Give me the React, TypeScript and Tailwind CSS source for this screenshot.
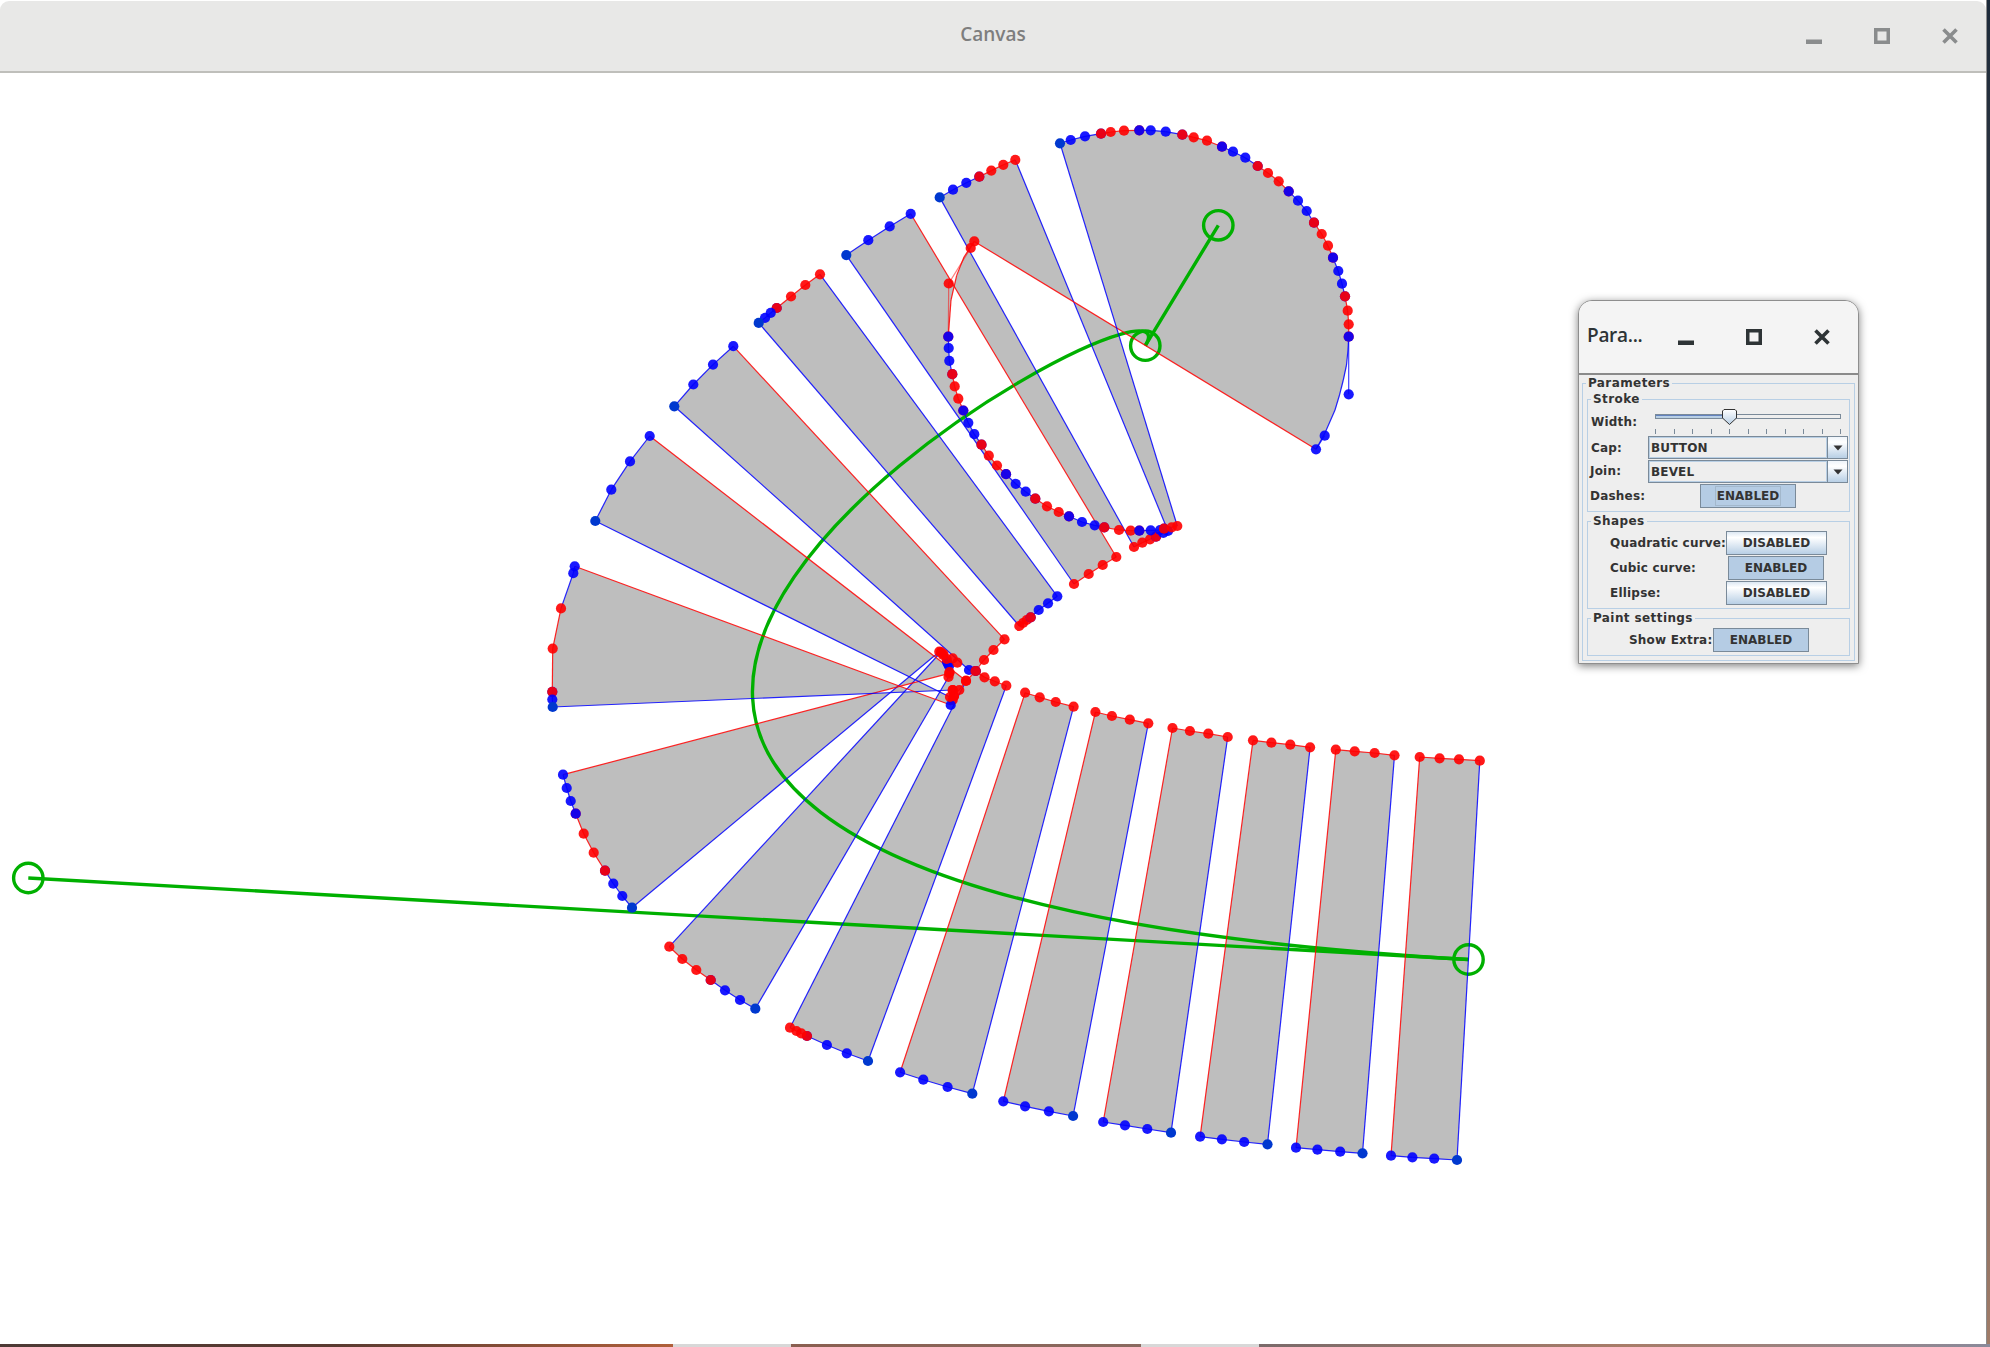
import React from 'react';

type Kind = 'r' | 'b' | 'R' | 'B' | 'g' | 'n' | 'x';
type Pt = [number, number, Kind];
type Strip = { outer: Pt[]; a: string; inner: Pt[]; b: string };

const RED = '#ff0000';
const BLUE = '#0000ff';
const GREEN = '#00b000';

const strips: Strip[] = [
  {
    outer: [[1419.7, 757, 'r'], [1439.6, 758.3, 'r'], [1459, 759.3, 'r'], [1479.8, 760.7, 'r']],
    a: BLUE,
    inner: [[1457, 1160, 'g'], [1434.2, 1158.7, 'b'], [1412.4, 1157.3, 'b'], [1391, 1155.7, 'b']],
    b: RED,
  },
  {
    outer: [[1335.8, 749.7, 'r'], [1354.7, 751.3, 'r'], [1374.6, 753, 'r'], [1394.5, 755.3, 'r']],
    a: BLUE,
    inner: [[1362.5, 1153.3, 'g'], [1340.2, 1151.7, 'b'], [1317.4, 1149.7, 'b'], [1296, 1147.7, 'b']],
    b: RED,
  },
  {
    outer: [[1253, 740.3, 'r'], [1271.4, 742.7, 'r'], [1290.3, 744.7, 'r'], [1310.1, 747.3, 'r']],
    a: BLUE,
    inner: [[1267.5, 1144.3, 'g'], [1244.2, 1142, 'b'], [1221.9, 1139.3, 'b'], [1200.1, 1136.7, 'b']],
    b: RED,
  },
  {
    outer: [[1172.5, 728, 'r'], [1189.9, 731, 'r'], [1208.3, 733.7, 'r'], [1227.7, 737, 'r']],
    a: BLUE,
    inner: [[1171, 1132.7, 'g'], [1147.3, 1129, 'b'], [1125, 1125.3, 'b'], [1103.2, 1122, 'b']],
    b: RED,
  },
  {
    outer: [[1095.4, 712, 'r'], [1111.9, 716, 'r'], [1129.8, 719.7, 'r'], [1148.3, 723.3, 'r']],
    a: BLUE,
    inner: [[1073.1, 1116, 'g'], [1048.9, 1111.3, 'b'], [1025.1, 1106.3, 'b'], [1003.3, 1101.3, 'b']],
    b: RED,
  },
  {
    outer: [[1025.1, 692.7, 'r'], [1039.7, 697.3, 'r'], [1055.7, 702, 'r'], [1073.6, 706.7, 'r']],
    a: BLUE,
    inner: [[972.3, 1093.7, 'g'], [947.6, 1087, 'b'], [923.3, 1079.7, 'b'], [900.1, 1072.3, 'b']],
    b: RED,
  },
  {
    outer: [[966, 681, 'r'], [976, 671, 'r'], [984.5, 677.3, 'r'], [994.8, 681.3, 'r'], [1006.3, 685.7, 'r']],
    a: BLUE,
    inner: [[868, 1061, 'g'], [846.8, 1053.3, 'b'], [826.9, 1045, 'b'], [807, 1036, 'R'], [801.2, 1033.3, 'r'], [796.4, 1031, 'r'], [790, 1027.7, 'r']],
    b: BLUE,
  },
  {
    outer: [[669.3, 946.7, 'r'], [682.3, 959, 'r'], [696.3, 970, 'r'], [710.7, 980, 'R'], [725, 990.3, 'b'], [740, 1000, 'b'], [755.3, 1008.7, 'g']],
    a: BLUE,
    inner: [[948.5, 677, 'r'], [947, 662, 'b'], [943, 655, 'r'], [941, 652, 'r']],
    b: BLUE,
  },
  {
    outer: [[563, 774.7, 'b'], [566.7, 788, 'b'], [570.7, 801, 'b'], [575.7, 813.7, 'B'], [583.7, 833.7, 'r'], [593.7, 852.7, 'r'], [605, 870.7, 'R'], [613.3, 883.7, 'b'], [622.3, 896, 'b'], [632, 907.7, 'g']],
    a: BLUE,
    inner: [[939.3, 651.7, 'r'], [948, 664, 'b'], [949.3, 673.3, 'r']],
    b: RED,
  },
  {
    outer: [[574.7, 566.3, 'b'], [573.3, 573.2, 'b'], [561, 608.4, 'r'], [552.7, 648.6, 'r'], [552.3, 691.8, 'R'], [552.3, 699.5, 'b'], [552.7, 707, 'g']],
    a: BLUE,
    inner: [[952.7, 690, 'r'], [954, 696, 'r'], [952.7, 700, 'r'], [950.7, 705, 'b']],
    b: RED,
  },
  {
    outer: [[649.7, 436, 'b'], [630, 461.4, 'b'], [611.3, 489.7, 'b'], [595.3, 521, 'g']],
    a: BLUE,
    inner: [[950, 697, 'r'], [959.3, 690, 'r'], [966, 680.7, 'r']],
    b: RED,
  },
  {
    outer: [[733.3, 346.2, 'b'], [713, 364.6, 'b'], [693.3, 384.5, 'b'], [674.3, 406.3, 'g']],
    a: BLUE,
    inner: [[969, 670, 'b'], [975.5, 671, 'R'], [984, 660, 'r'], [993.5, 650, 'r'], [1004.5, 639.3, 'r']],
    b: RED,
  },
  {
    outer: [[820, 274.3, 'r'], [805.3, 285, 'r'], [791, 296.5, 'r'], [776.7, 308, 'R'], [770.7, 312.9, 'b'], [765, 317.9, 'b'], [758.7, 322.9, 'g']],
    a: BLUE,
    inner: [[1019.3, 626, 'r'], [1023, 623, 'r'], [1026.7, 620, 'r'], [1030.7, 617.3, 'R'], [1038.7, 610, 'b'], [1048, 603.3, 'b'], [1057.3, 596.3, 'b']],
    b: BLUE,
  },
  {
    outer: [[910.7, 213.8, 'b'], [889.7, 226.4, 'b'], [868.3, 240.2, 'b'], [846.3, 255.1, 'g']],
    a: BLUE,
    inner: [[1074, 584, 'r'], [1088.7, 574, 'r'], [1102.7, 565, 'r'], [1116.3, 557, 'r']],
    b: RED,
  },
  {
    outer: [[1015.3, 159.9, 'r'], [1003.3, 164.8, 'r'], [991.3, 170.6, 'r'], [979.3, 176.7, 'R'], [966.3, 182.8, 'b'], [953, 189.7, 'b'], [939.7, 197.4, 'g']],
    a: BLUE,
    inner: [[1134, 547, 'r'], [1142.3, 542.7, 'r'], [1150, 539.3, 'r'], [1156, 536.7, 'R'], [1163.3, 533, 'b'], [1168, 531, 'b']],
    b: BLUE,
  },
  {
    // the fan around the sharp turn, its outer arc ends in a curve without dots
    outer: [
      [1060, 143.3, 'g'], [1070.7, 140, 'b'], [1085, 136.3, 'b'], [1101, 133.7, 'R'], [1110.7, 132, 'r'], [1124, 130.7, 'r'],
      [1139.3, 130.3, 'B'], [1150.7, 130.3, 'b'], [1165.7, 131.7, 'b'], [1182.3, 134.7, 'R'], [1193.7, 137.3, 'r'], [1207, 140.7, 'r'],
      [1222, 146.7, 'B'], [1233, 151.7, 'b'], [1245.3, 157.7, 'b'], [1257.7, 166, 'R'], [1268, 173, 'r'], [1278.7, 181.3, 'r'],
      [1288.7, 191.3, 'B'], [1298, 200.7, 'b'], [1306.7, 211, 'b'], [1314, 222.7, 'R'], [1321.7, 234, 'r'], [1328, 245.7, 'r'],
      [1333, 257.7, 'B'], [1338.3, 271, 'b'], [1342, 283.7, 'b'], [1345, 296.3, 'R'], [1347.7, 310.7, 'r'], [1348.7, 324.3, 'r'],
      [1348.7, 336.7, 'B'], [1348, 350, 'n'], [1346.5, 365, 'n'], [1343.3, 380, 'n'], [1339.5, 395, 'n'], [1335, 410, 'n'], [1325, 433, 'n'], [1316, 449.3, 'n'],
    ],
    a: RED,
    inner: [
      [974.3, 241.4, 'x'], [964, 257, 'x'], [956.7, 275.4, 'x'], [951, 300, 'x'], [948.3, 336.7, 'B'],
      [948.7, 348.1, 'b'], [949.3, 360.8, 'b'], [952.3, 374.2, 'R'], [954.7, 386.4, 'r'], [958.3, 398.7, 'r'],
      [963.3, 410.5, 'B'], [968.3, 422.8, 'b'], [974.3, 434.2, 'b'], [981.5, 444.7, 'R'], [988.8, 455.7, 'r'], [997, 465.5, 'r'],
      [1006, 474.2, 'B'], [1015.7, 483.8, 'b'], [1025.7, 491.7, 'b'], [1035.3, 498.7, 'R'], [1047, 506.3, 'r'], [1058.7, 512, 'r'],
      [1069, 516.3, 'B'], [1082, 522, 'b'], [1094.7, 525.3, 'b'], [1104.3, 527.3, 'R'], [1119, 530, 'r'], [1130.7, 530.7, 'r'],
      [1139.3, 530.7, 'B'], [1150.7, 530.3, 'b'], [1160, 530, 'b'], [1164, 528.7, 'R'], [1171.7, 527.3, 'r'], [1177.3, 526, 'r'],
    ],
    b: BLUE,
  },
];

// dots that sit off the filled outline, and the clump at the inner junction
const extraDots: Pt[] = [
  [1348.7, 394.3, 'b'], [1324.7, 435.7, 'b'], [1316, 449.3, 'b'],
  [974.3, 241.4, 'r'], [970.7, 248, 'r'], [948.7, 283.5, 'r'],
  [949, 666, 'b'],
  [943.5, 654, 'r'], [946.7, 659, 'r'], [952.7, 658.3, 'r'], [957.3, 662.7, 'r'], [949.5, 672, 'r'],
  [952.7, 690, 'r'], [954, 696, 'r'],
];

const colourOf = (k: Kind) => (k === 'r' || k === 'x' ? RED : k === 'R' || k === 'B' ? null : BLUE);
const segColour = (p: Pt, q: Pt) => colourOf(p[2]) ?? colourOf(q[2]) ?? RED;

const outline = (s: Strip) => {
  const pts = [...s.outer, ...s.inner];
  return 'M' + pts.map((p) => `${p[0]} ${p[1]}`).join('L') + 'Z';
};

const Dot = ({ p }: { p: Pt }) => {
  const [cx, cy, k] = p;
  if (k === 'n' || k === 'x') return null;
  if (k === 'R' || k === 'B') {
    return (
      <>
        <circle cx={cx} cy={cy} r={5.1} fill={k === 'R' ? BLUE : RED} fillOpacity={0.9} />
        <circle cx={cx} cy={cy} r={5.1} fill={k === 'R' ? RED : BLUE} fillOpacity={0.9} />
      </>
    );
  }
  if (k === 'g') return <circle cx={cx} cy={cy} r={5.1} fill="#0038cf" />;
  return <circle cx={cx} cy={cy} r={5.1} fill={k === 'r' ? RED : BLUE} fillOpacity={0.9} />;
};

const Segments = ({ pts, colour }: { pts: Pt[]; colour?: string }) => (
  <>
    {pts.slice(1).map((q, i) => (
      <line
        key={i}
        x1={pts[i][0]}
        y1={pts[i][1]}
        x2={q[0]}
        y2={q[1]}
        stroke={colour ?? segColour(pts[i], q)}
        strokeWidth={1.2}
        strokeOpacity={0.85}
      />
    ))}
  </>
);

const Drawing = () => (
  <svg viewBox="0 73 1986 1271" className="block h-full w-full">
    <path d={strips.map(outline).join('')} fill="#bebebe" fillRule="evenodd" />

    <g fill="none" stroke={GREEN} strokeWidth={3.4}>
      <path d="M1145.3 345.7C1218.3 225.3 28.3 878 1468.5 959.5" />
      <path d="M28.3 878L1468.5 959.5M1218.3 225.3L1145.3 345.7" />
      <circle cx={1218.3} cy={225.3} r={14.7} />
      <circle cx={1145.3} cy={345.7} r={14.7} />
      <circle cx={28.3} cy={878} r={14.7} />
      <circle cx={1468.5} cy={959.5} r={14.7} />
    </g>

    {strips.map((s, i) => {
      const oLast = s.outer[s.outer.length - 1];
      const iLast = s.inner[s.inner.length - 1];
      return (
        <g key={i}>
          <Segments pts={s.outer} />
          <Segments pts={s.inner} />
          <Segments pts={[oLast, s.inner[0]]} colour={s.a} />
          <Segments pts={[iLast, s.outer[0]]} colour={s.b} />
        </g>
      );
    })}

    {/* the straight control lines beside the two curved ends */}
    <g fill="none" strokeWidth={1.2}>
      <path d="M1348.7 337V394.3M1324.7 435.7L1316 449.3" stroke={BLUE} strokeOpacity={0.75} />
      <path d="M974.3 241.4L970.7 248L948.7 283.5L948.3 337" stroke={RED} strokeOpacity={0.5} />
    </g>

    {strips.map((s, i) => (
      <g key={i}>
        {[...s.outer, ...s.inner].map((p, j) => (
          <Dot key={j} p={p} />
        ))}
      </g>
    ))}
    {extraDots.map((p, i) => (
      <Dot key={i} p={p} />
    ))}
  </svg>
);

const WindowButtons = ({ colour }: { colour: string }) => (
  <div className="flex" style={{ color: colour }}>
    <div className="flex w-[68px] justify-center">
      <svg width="16" height="16" viewBox="0 0 16 16">
        <rect x="0" y="11.5" width="16" height="4.5" fill="currentColor" />
      </svg>
    </div>
    <div className="flex w-[68px] justify-center">
      <svg width="16" height="16" viewBox="0 0 16 16">
        <rect x="1.75" y="1.75" width="12.5" height="12.5" fill="none" stroke="currentColor" strokeWidth="3.5" />
      </svg>
    </div>
    <div className="flex w-[68px] justify-center">
      <svg width="16" height="16" viewBox="0 0 16 16">
        <path d="M1.5 1.5L14.5 14.5M14.5 1.5L1.5 14.5" fill="none" stroke="currentColor" strokeWidth="3.6" />
      </svg>
    </div>
  </div>
);

const Group = ({ title, className, children }: { title: string; className?: string; children: React.ReactNode }) => (
  <fieldset className={`border border-[#b8cfe5] ${className ?? ''}`}>
    <legend className="ml-[3px] h-[16px] px-[2px] leading-[16px] tracking-[0.4px]">{title}</legend>
    {children}
  </fieldset>
);

const ToggleButton = ({ on, focused, className }: { on?: boolean; focused?: boolean; className?: string }) => (
  <div
    className={`flex h-[24px] items-center justify-center border border-[#7a8a99] ${
      on ? 'bg-[#b5cce4]' : 'bg-gradient-to-b from-[#dde8f3] via-white via-[25%] to-[#b8cfe5]'
    } ${className ?? ''}`}
  >
    <span className={`px-px ${focused ? 'border border-[#a3b8cc]' : 'border border-transparent'}`}>
      {on ? 'ENABLED' : 'DISABLED'}
    </span>
  </div>
);

const Combo = ({ value }: { value: string }) => (
  <div className="flex h-[23px] w-[200px] border border-[#7a8a99]">
    <div className="flex flex-1 items-center border border-[#b8cfe5] pl-px tracking-[0.15px]">{value}</div>
    <div className="flex w-[20px] items-center justify-center border-l border-[#7a8a99] bg-gradient-to-b from-[#eef4fa] via-white via-[25%] to-[#b8cfe5]">
      <svg width="10" height="6" viewBox="0 0 10 6">
        <path d="M0.5 0.5H9.5L5 5.5Z" fill="#333333" />
      </svg>
    </div>
  </div>
);

const Slider = () => (
  <div className="relative ml-[7px] h-[29px] w-[186px]">
    <div className="mt-[7px] flex h-[5px] border border-[#7a8a99]">
      <div className="w-[74px] border-t border-[#6382bf] bg-[#b8cfe5]" />
    </div>
    <div className="mt-[10px] flex justify-between">
      {Array.from({ length: 11 }).map((_, i) => (
        <span key={i} className="h-[5px] w-px bg-[#7a8a99]" />
      ))}
    </div>
    {/* thumb lies over the track */}
    <svg className="absolute left-[67px] top-[2px]" width="15" height="16" viewBox="0 0 15 16">
      <defs>
        <linearGradient id="thumb" x1="0" x2="0" y1="0" y2="1">
          <stop offset="0" stopColor="#ffffff" />
          <stop offset="1" stopColor="#b8cfe5" />
        </linearGradient>
      </defs>
      <path d="M2 .5H13L14.5 2V9L7.5 15.5L.5 9V2Z" fill="url(#thumb)" stroke="#333333" />
    </svg>
  </div>
);

const ParamsWindow = () => (
  <div className="absolute left-[1578px] top-[300px] h-[364px] w-[281px] rounded-t-[14px] border border-[#8e8e8e] bg-[#eeeeee] font-['DejaVu_Sans',sans-serif] text-[12px] font-bold whitespace-nowrap text-[#333333] shadow-[0_2px_9px_rgba(0,0,0,0.5)]">
    <div className="flex h-[74px] items-center rounded-t-[13px] border-b-2 border-[#8a8a8a] bg-[#f4f4f4]">
      <span className="w-[73px] pb-[3px] pl-[8px] font-['Open_Sans',sans-serif] text-[19px] font-semibold tracking-[-0.3px] text-[#2e3436]">
        Para...
      </span>
      <WindowButtons colour="#2e3436" />
    </div>

    <Group title="Parameters" className="mx-[3px]">
      <div className="px-[4px] pb-[4px] tracking-[0.2px]">
        <Group title="Stroke" className="pb-[3px]">
          <div className="grid grid-cols-[60px_200px] items-center">
            <span className="pl-[3px]">Width:</span>
            <Slider />
            <span className="pl-[3px]">Cap:</span>
            <Combo value="BUTTON" />
            <span className="pl-[2px]">Join:</span>
            <div className="mt-px">
              <Combo value="BEVEL" />
            </div>
            <span className="pl-[2px]">Dashes:</span>
            <div className="mt-px tracking-normal">
              <ToggleButton on focused className="ml-[52px] w-[96px]" />
            </div>
          </div>
        </Group>

        <Group title="Shapes" className="mt-px pb-[3px]">
          <div className="grid grid-cols-[138px_104px] items-center gap-y-px pt-[2px]">
            <span className="pl-[22px]">Quadratic curve:</span>
            <ToggleButton className="w-[101px] tracking-normal" />
            <span className="pl-[22px]">Cubic curve:</span>
            <ToggleButton on className="ml-[2px] w-[96px] tracking-normal" />
            <span className="pl-[22px]">Ellipse:</span>
            <ToggleButton className="w-[101px] tracking-normal" />
          </div>
        </Group>

        <Group title="Paint settings" className="mt-px pb-[3px]">
          <div className="flex items-center pt-[2px]">
            <span className="w-[125px] pl-[41px]">Show Extra:</span>
            <ToggleButton on className="w-[96px] tracking-normal" />
          </div>
        </Group>
      </div>
    </Group>
  </div>
);

export default function App() {
  return (
    <div className="relative flex h-[1347px] w-[1990px] flex-col overflow-hidden bg-gradient-to-b from-[#1c2a3a] to-[#a07c68]">
      <div className="flex min-h-0 w-[1987px] flex-1 flex-col border-r border-[#8c8c8c] bg-white">
        <header className="mt-px grid h-[72px] shrink-0 grid-cols-[1fr_auto_1fr] items-center rounded-t-[9px] border-b-2 border-[#bfbfbb] bg-[#e8e8e7]">
          <div />
          <h1 className="pb-[3px] font-['Open_Sans',sans-serif] text-[19px] font-semibold text-[#7e7e7e]">Canvas</h1>
          <div className="flex justify-end pr-[2px]">
            <WindowButtons colour="#8a8c8d" />
          </div>
        </header>
        <main className="min-h-0 flex-1">
          <Drawing />
        </main>
      </div>

      <div className="flex h-[3px] shrink-0">
        <div className="w-[673px] bg-gradient-to-r from-[#4d3a35] via-[#5a3a30] to-[#b0603a]" />
        <div className="w-[118px] bg-[#d8d8d8]" />
        <div className="w-[350px] bg-gradient-to-r from-[#8a5f50] to-[#8a6a60]" />
        <div className="w-[118px] bg-[#d8d8d8]" />
        <div className="flex-1 bg-gradient-to-r from-[#7a6a6a] via-[#a87c68] to-[#8a8a9a]" />
      </div>

      <ParamsWindow />
    </div>
  );
}
